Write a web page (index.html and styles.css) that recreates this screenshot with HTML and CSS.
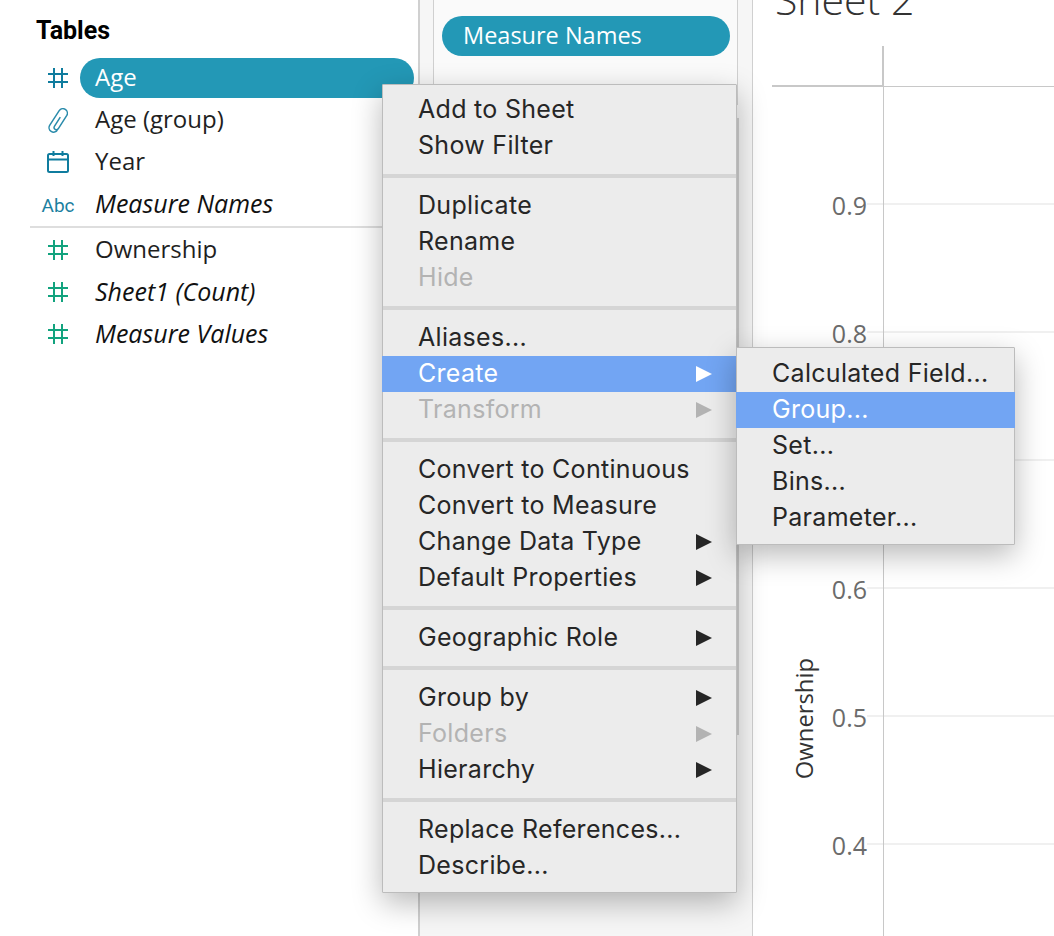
FILE: index.html
```html
<!DOCTYPE html>
<html lang="en">
<head>
<meta charset="utf-8">
<title>Sheet 2</title>
<link rel="stylesheet" href="styles.css">
</head>
<body>
<div class="page">
  <aside class="data-pane">
    <h2 class="tables-title">Tables</h2>
    <ul class="fields">
      <li class="field"><span class="field-icon"><svg class="hash blue" viewBox="0 0 20 20"><path d="M6 0v20M14 0v20M0 6h20M0 14h20"/></svg></span><span class="field-name selected">Age</span></li>
      <li class="field"><span class="field-icon"><svg class="clip" viewBox="0 0 20 25"><path d="M12.300 9.200 L6.400 18.400 A2.250 2.250 0 0 0 10.200 20.800 L18.800 7.400 A4.500 4.500 0 0 0 11.200 2.600 L1.800 17.200 A4.500 4.500 0 0 0 9.400 22.100"/></svg></span><span class="field-name">Age (group)</span></li>
      <li class="field"><span class="field-icon"><svg class="calendar" viewBox="0 0 22 22"><rect x="1" y="3" width="20" height="18" rx="1.500"/><path d="M1 8.500h20M6.500 0v5M15.500 0v5"/></svg></span><span class="field-name">Year</span></li>
      <li class="field"><span class="field-icon abc">Abc</span><span class="field-name em">Measure Names</span></li>
      <li class="fields-divider"></li>
      <li class="field"><span class="field-icon"><svg class="hash green" viewBox="0 0 20 20"><path d="M6 0v20M14 0v20M0 6h20M0 14h20"/></svg></span><span class="field-name">Ownership</span></li>
      <li class="field"><span class="field-icon"><svg class="hash green" viewBox="0 0 20 20"><path d="M6 0v20M14 0v20M0 6h20M0 14h20"/></svg></span><span class="field-name em">Sheet1 (Count)</span></li>
      <li class="field"><span class="field-icon"><svg class="hash green" viewBox="0 0 20 20"><path d="M6 0v20M14 0v20M0 6h20M0 14h20"/></svg></span><span class="field-name em">Measure Values</span></li>
    </ul>
  </aside>

  <section class="shelves">
    <div class="card card-top"><div class="pill">Measure Names</div></div>
    <div class="card card-main"></div>
  </section>

  <main class="view">
    <h1 class="sheet-title">Sheet 2</h1>
    <div class="chart">
      <div class="chart-head"><div class="corner"></div></div>
      <div class="chart-spacer"></div>
      <div class="tick-row"><span class="tick-label">0.9</span><span class="tick-mark"></span></div>
      <div class="tick-row"><span class="tick-label">0.8</span><span class="tick-mark"></span></div>
      <div class="tick-row"><span class="tick-label"></span><span class="tick-mark"></span></div>
      <div class="tick-row"><span class="tick-label">0.6</span><span class="tick-mark"></span></div>
      <div class="tick-row"><span class="tick-label">0.5</span><span class="tick-mark"></span></div>
      <div class="tick-row"><span class="tick-label">0.4</span><span class="tick-mark"></span></div>
      <div class="axis-title">Ownership</div>
    </div>
  </main>
</div>

<nav class="menu context-menu">
  <div class="menu-item">Add to Sheet</div>
  <div class="menu-item">Show Filter</div>
  <div class="menu-sep"></div>
  <div class="menu-item">Duplicate</div>
  <div class="menu-item">Rename</div>
  <div class="menu-item disabled">Hide</div>
  <div class="menu-sep"></div>
  <div class="menu-item">Aliases...</div>
  <div class="menu-item active">Create<i class="arrow"></i></div>
  <div class="menu-item disabled">Transform<i class="arrow"></i></div>
  <div class="menu-sep"></div>
  <div class="menu-item">Convert to Continuous</div>
  <div class="menu-item">Convert to Measure</div>
  <div class="menu-item">Change Data Type<i class="arrow"></i></div>
  <div class="menu-item">Default Properties<i class="arrow"></i></div>
  <div class="menu-sep"></div>
  <div class="menu-item">Geographic Role<i class="arrow"></i></div>
  <div class="menu-sep"></div>
  <div class="menu-item">Group by<i class="arrow"></i></div>
  <div class="menu-item disabled">Folders<i class="arrow"></i></div>
  <div class="menu-item">Hierarchy<i class="arrow"></i></div>
  <div class="menu-sep"></div>
  <div class="menu-item">Replace References...</div>
  <div class="menu-item">Describe...</div>
</nav>

<nav class="menu sub-menu">
  <div class="menu-item">Calculated Field...</div>
  <div class="menu-item active">Group...</div>
  <div class="menu-item">Set...</div>
  <div class="menu-item">Bins...</div>
  <div class="menu-item">Parameter...</div>
</nav>
</body>
</html>
```
FILE: styles.css
```css
* { box-sizing: border-box; }
html, body { margin: 0; padding: 0; height: 936px; overflow: hidden; background: #fff; }
body { font-family: "Open Sans", "Noto Sans", sans-serif; color: #1f1f1f; position: relative; width: 1054px; }

.page { display: grid; grid-template-columns: 418px 335px 1fr; height: 936px; }

/* Data pane */
.data-pane { padding-left: 36px; background: #fff; }
.tables-title { margin: 0 0 -4px; font-size: 25px; line-height: 61px; font-weight: 700; color: #000; font-family: "Roboto", sans-serif; }
.fields { list-style: none; margin: 0; padding: 0; }
.field { display: flex; align-items: center; height: 42px; font-size: 24px; }
.field-icon { width: 44px; flex: none; display: flex; justify-content: center; align-items: center; color: #1b7fa0; }
.abc { font-size: 19px; font-family: "Roboto", sans-serif; padding-top: 3px; }
.field-name { flex: 1; height: 40px; line-height: 38px; padding-left: 15px; margin-right: 4px; border-radius: 20px; }
.field-name.selected { background: #2398b6; color: #fff; }
.em { font-style: italic; font-size: 25px; color: #111; }
.fields-divider { height: 2px; margin: 1px 0 1px -6px; background: #dedede; }

.hash { width: 20px; height: 20px; fill: none; stroke-width: 2; display: block; }
.hash.blue { stroke: #0f7c9e; }
.hash.green { stroke: #12a37e; }
.clip { width: 20px; height: 25px; fill: none; stroke: #2a8bab; stroke-width: 1.5; display: block; }
.calendar { width: 22px; height: 22px; fill: none; stroke: #0f7c9e; stroke-width: 2; display: block; }

/* Shelves */
.shelves { display: flex; flex-direction: column; gap: 13px; padding: 0 14px 0 13px; background: #f6f6f6; border-left: 2px solid #d0d0d0; border-right: 1px solid #d0d0d0; }
.card { background: #fafafa; border: 1px solid #d0d0d0; border-top: 0; }
.card-top { height: 105px; padding: 16px 7px 0 8px; }
.card-main { height: 617px; border-top: 1px solid #d0d0d0; border-right-width: 2px; background: #f5f5f5; margin-right: -1px; }
.pill { height: 40px; line-height: 38px; padding-left: 21px; border-radius: 20px; background: #2398b6; color: #fff; font-size: 23.5px; }

/* View */
.view { padding-left: 19px; min-width: 0; }
.sheet-title { margin: -21px 0 0 3px; height: 67px; font-size: 41px; line-height: 40px; font-weight: 300; color: #333; }
.chart { position: relative; }
.chart-head { height: 41px; border-bottom: 1px solid #c8c8c8; }
.corner { width: 112px; height: 41px; border-right: 2px solid #c8c8c8; border-bottom: 2px solid #c8c8c8; }
.chart-spacer { height: 116px; margin-left: 111px; border-left: 1px solid #c8c8c8; }
.tick-row { display: flex; height: 128px; background: linear-gradient(#c8c8c8, #c8c8c8) 111px 0 / 1px 100% no-repeat; }
.tick-label { width: 95px; height: 28px; margin-top: -12px; line-height: 28px; text-align: right; font-size: 25px; color: #6b6b6b; }
.tick-mark { width: 16px; height: 2px; background: #f0f0f0; flex: none; }
.tick-row::after { content: ""; flex: 1; height: 2px; background: #f0f0f0; border-left: 1px solid #c8c8c8; }
.axis-title { position: absolute; left: 19px; top: 612px; writing-mode: vertical-rl; transform: rotate(180deg); font-size: 23.8px; line-height: 26px; color: #333; }

/* Menus */
.menu { position: absolute; background: #ececec; border: 1px solid #bcbcbc; border-radius: 1px; box-shadow: 0 10px 30px rgba(0,0,0,.28); font-family: "Inter", "Roboto", sans-serif; font-size: 25px; letter-spacing: .3px; color: #262626; }
.context-menu { left: 382px; top: 84px; width: 355px; height: 809px; padding: 7px 0 8px; }
.sub-menu { left: 736px; top: 347px; width: 279px; height: 198px; padding: 8px 0; }
.menu-item { position: relative; height: 36px; line-height: 34px; padding-left: 35px; white-space: nowrap; }
.menu-sep { height: 4px; margin: 10px 0; background: #d5d5d5; }
.menu-item.active { background: #72a5f3; color: #fff; margin: 0 -1px; padding-left: 36px; }
.disabled { color: #b3b3b3; }
.arrow { position: absolute; right: 24px; top: 10px; width: 0; height: 0; border-left: 16px solid currentColor; border-top: 8px solid transparent; border-bottom: 8px solid transparent; }
.active .arrow { right: 25px; }
```
